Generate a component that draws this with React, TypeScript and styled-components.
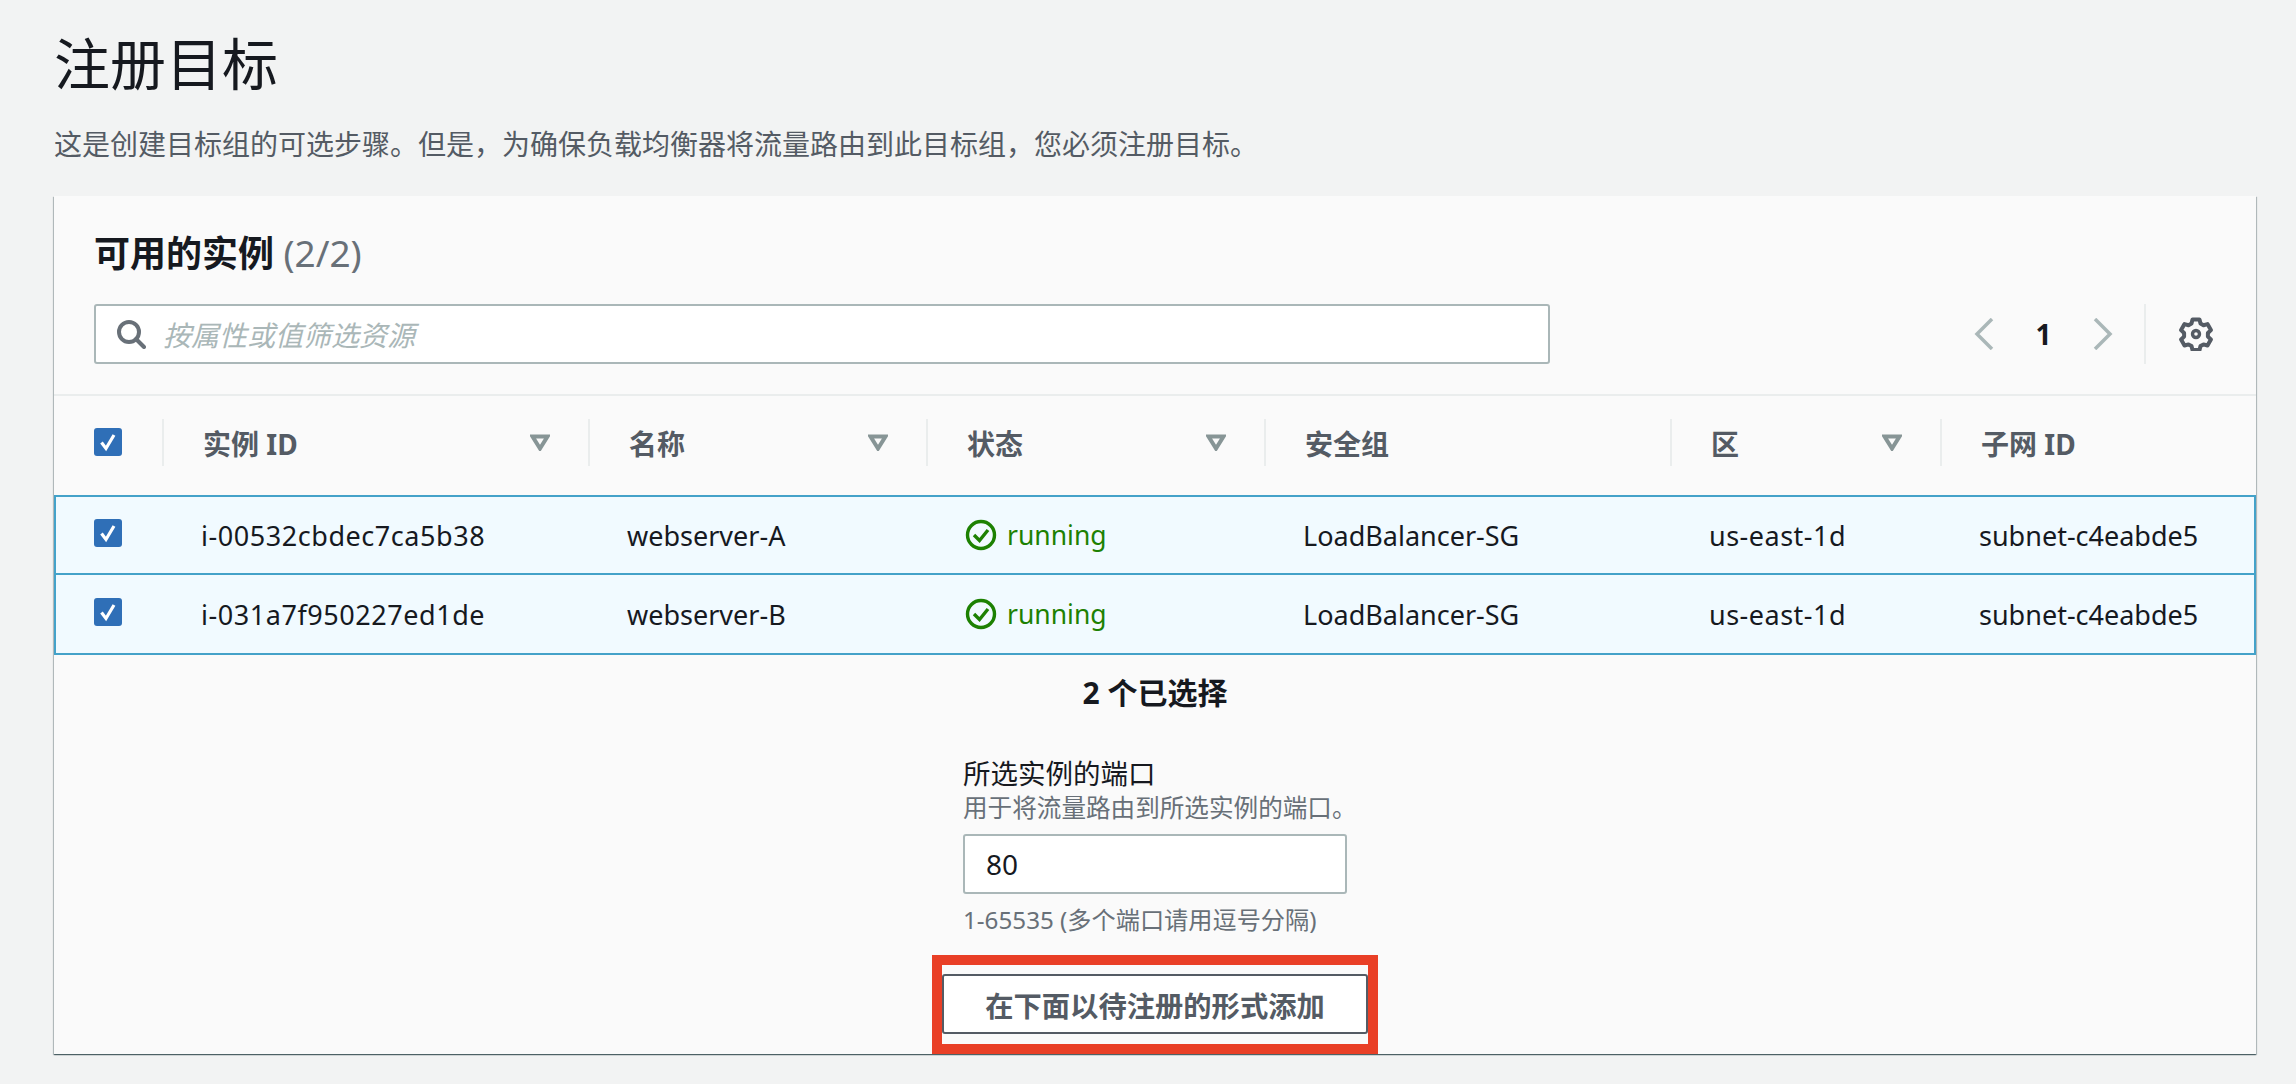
import React from "react";
import styled, { createGlobalStyle } from "styled-components";

const Global = createGlobalStyle`
  html, body { margin: 0; padding: 0; background: #f2f3f3; }
  body { font-family: "Noto Sans", "Noto Sans CJK SC", sans-serif; color: #16191f; }
  * { box-sizing: border-box; }
`;

const Page = styled.main`
  width: 2296px;
  height: 1084px;
  padding: 29px 40px 30px 54px;
  overflow: hidden;
`;

const Title = styled.h1`
  margin: 0 0 27px;
  font-size: 56px;
  line-height: 68px;
  font-weight: 400;
  color: #16191f;
`;

const Subtitle = styled.p`
  margin: 0 0 32px;
  font-size: 28px;
  line-height: 40px;
  color: #545b64;
`;

const Card = styled.section`
  height: 858px;
  background: #fafafa;
  display: flex;
  flex-direction: column;
  box-shadow: 0 1px 1px 0 rgba(0, 28, 36, 0.5), 1px 1px 1px 0 rgba(0, 28, 36, 0.2),
    -1px 1px 1px 0 rgba(0, 28, 36, 0.2);
`;

const CardHeader = styled.header`
  padding: 38px 0 30px 40px;
  border-bottom: 2px solid #eaeded;
`;

const CardTitle = styled.h2`
  margin: 0 0 30px;
  height: 40px;
  font-size: 36px;
  line-height: 40px;
  font-weight: 700;
  color: #16191f;
`;

const Count = styled.span`
  font-weight: 400;
  font-size: 37px;
  line-height: 1;
  color: #687078;
`;

const Toolbar = styled.div`
  display: flex;
  align-items: center;
`;

const SearchBox = styled.div`
  width: 1456px;
  height: 60px;
  display: flex;
  align-items: center;
  gap: 17px;
  padding-left: 20px;
  background: #fff;
  border: 2px solid #aab7b8;
  border-radius: 3px;
  color: #687078;
`;

const Placeholder = styled.span`
  font-size: 28px;
  font-style: italic;
  color: #aab7b8;
`;

const Pager = styled.div`
  display: flex;
  align-items: center;
  margin-left: 424px;
  height: 60px;
`;

const PageNumber = styled.span`
  width: 99px;
  text-align: center;
  font-size: 28px;
  font-weight: 700;
  color: #16191f;
`;

const Settings = styled.div`
  margin-left: 31px;
  height: 60px;
  padding-left: 33px;
  display: flex;
  align-items: center;
  border-left: 2px solid #eaeded;
  color: #545b64;
`;

const HeaderRow = styled.div`
  display: grid;
  grid-template-columns: 108px 426px 338px 338px 406px 270px 1fr;
  height: 99px;
  padding-bottom: 6px;
  align-items: center;
`;

const SelectHead = styled.div`
  padding: 0 0 2px 40px;
  display: flex;
`;

const HeadCell = styled.div`
  height: 47px;
  padding: 0 38px 0 39px;
  display: flex;
  align-items: center;
  justify-content: space-between;
  border-left: 2px solid #eaeded;
  font-size: 28px;
  font-weight: 700;
  color: #545b64;
`;

const Row = styled.div<{ $last?: boolean }>`
  display: grid;
  grid-template-columns: 107px 426px 338px 338px 406px 270px 1fr;
  align-items: center;
  height: ${(p) => (p.$last ? 82 : 80)}px;
  margin-top: ${(p) => (p.$last ? -2 : 0)}px;
  background: #f1faff;
  border: 2px solid #44a2c9;
  font-size: 27px;
  color: #16191f;
`;

const SelectCell = styled.div`
  padding: 0 0 4px 38px;
  display: flex;
`;

const Cell = styled.div<{ $track?: number }>`
  padding-left: 38px;
  white-space: nowrap;
  letter-spacing: ${(p) => p.$track ?? 0}px;
`;

const StatusCell = styled(Cell)`
  display: flex;
  align-items: center;
  gap: 10px;
  font-size: 26.5px;
  color: #1d8102;
`;

const Form = styled.div`
  flex: 1;
  display: flex;
  flex-direction: column;
  align-items: center;
`;

const Selected = styled.div`
  margin-top: 18px;
  font-size: 30px;
  line-height: 40px;
  font-weight: 700;
  color: #16191f;
`;

const Field = styled.div`
  margin-top: 44px;
  width: 384px;
`;

const FieldLabel = styled.div`
  font-size: 27.5px;
  line-height: 34px;
  color: #16191f;
  white-space: nowrap;
`;

const FieldDesc = styled.div`
  font-size: 24.6px;
  line-height: 34px;
  margin-bottom: 9px;
  color: #687078;
  white-space: nowrap;
`;

const PortInput = styled.div`
  height: 60px;
  display: flex;
  align-items: center;
  padding-left: 21px;
  background: #fff;
  border: 2px solid #aab7b8;
  border-radius: 3px;
  font-size: 28px;
  color: #16191f;
`;

const FieldHint = styled.div`
  margin-top: 10px;
  font-size: 24.2px;
  line-height: 32px;
  color: #687078;
  white-space: nowrap;
`;

const Highlight = styled.div`
  margin-top: 19px;
  border: 10px solid #e93f26;
  padding: 9px 0 10px;
  display: flex;
`;

const AddButton = styled.button`
  width: 426px;
  height: 60px;
  padding: 0;
  background: #fff;
  border: 2px solid #545b64;
  border-radius: 3px;
  font-family: inherit;
  font-size: 28.3px;
  font-weight: 700;
  color: #545b64;
`;

const Check = () => (
  <svg width="28" height="28" viewBox="0 0 28 28">
    <rect width="28" height="28" rx="3" fill="#2f6fb7" />
    <path d="M7.5 14.5l4.5 6 8-13.5" fill="none" stroke="#fff" strokeWidth="3.2" />
  </svg>
);

const Filter = () => (
  <svg width="20" height="17" viewBox="0 0 20 17">
    <path d="M2.5 2.5h15L10 14.5z" fill="none" stroke="#879596" strokeWidth="4" strokeLinejoin="miter" />
  </svg>
);

const SearchIcon = () => (
  <svg width="30" height="30" viewBox="0 0 30 30" fill="none" stroke="currentColor" strokeWidth="4">
    <circle cx="13" cy="13" r="10" />
    <path d="M20 20l8 8" strokeLinecap="round" />
  </svg>
);

const Chevron = ({ dir }: { dir: "left" | "right" }) => (
  <svg width="20" height="32" viewBox="0 0 20 32" fill="none" stroke="#aab7b8" strokeWidth="3.5">
    <path d={dir === "left" ? "M18 1L3 16l15 15" : "M2 1l15 15L2 31"} />
  </svg>
);

const Gear = () => (
  <svg width="34" height="34" viewBox="0 0 34 34" fill="none" stroke="currentColor" strokeWidth="4" strokeLinejoin="round">
    <path d="M13.5 2.5h7l1 4 3 1.7 4-1.1 3.4 6-3 2.9 0 3.6 3 2.9-3.4 6-4-1.1-3 1.7-1 4h-7l-1-4-3-1.7-4 1.1-3.4-6 3-2.9 0-3.6-3-2.9 3.4-6 4 1.1 3-1.7z" />
    <circle cx="17" cy="17" r="3.5" strokeWidth="3.4" />
  </svg>
);

const Running = () => (
  <svg width="32" height="32" viewBox="0 0 32 32" fill="none" stroke="#1d8102" strokeWidth="3.4">
    <circle cx="16" cy="16" r="13.5" />
    <path d="M9 16l5.5 5.5L23 11" />
  </svg>
);

const intro =
  "这是创建目标组的可选步骤。但是\uFF0C为确保负载均衡器将流量路由到此目标组\uFF0C您必须注册目标。";

const heads = [
  { label: "实例 ID", filter: true },
  { label: "名称", filter: true },
  { label: "状态", filter: true },
  { label: "安全组", filter: false },
  { label: "区", filter: true },
  { label: "子网 ID", filter: false },
];

const instances = [
  { id: "i-00532cbdec7ca5b38", name: "webserver-A" },
  { id: "i-031a7f950227ed1de", name: "webserver-B" },
];

export default function App() {
  return (
    <>
      <Global />
      <Page>
        <Title>注册目标</Title>
        <Subtitle>{intro}</Subtitle>
        <Card>
          <CardHeader>
            <CardTitle>
              可用的实例 <Count>(2/2)</Count>
            </CardTitle>
            <Toolbar>
              <SearchBox>
                <SearchIcon />
                <Placeholder>按属性或值筛选资源</Placeholder>
              </SearchBox>
              <Pager>
                <Chevron dir="left" />
                <PageNumber>1</PageNumber>
                <Chevron dir="right" />
                <Settings>
                  <Gear />
                </Settings>
              </Pager>
            </Toolbar>
          </CardHeader>
          <HeaderRow>
            <SelectHead>
              <Check />
            </SelectHead>
            {heads.map((h) => (
              <HeadCell key={h.label}>
                {h.label}
                {h.filter && <Filter />}
              </HeadCell>
            ))}
          </HeaderRow>
          {instances.map((item, i) => (
            <Row key={item.id} $last={i === 1}>
              <SelectCell>
                <Check />
              </SelectCell>
              <Cell $track={0.55}>{item.id}</Cell>
              <Cell>{item.name}</Cell>
              <StatusCell>
                <Running />
                running
              </StatusCell>
              <Cell>LoadBalancer-SG</Cell>
              <Cell $track={0.5}>us-east-1d</Cell>
              <Cell>subnet-c4eabde5</Cell>
            </Row>
          ))}
          <Form>
            <Selected>2 个已选择</Selected>
            <Field>
              <FieldLabel>所选实例的端口</FieldLabel>
              <FieldDesc>用于将流量路由到所选实例的端口。</FieldDesc>
              <PortInput>80</PortInput>
              <FieldHint>1-65535 (多个端口请用逗号分隔)</FieldHint>
            </Field>
            <Highlight>
              <AddButton>在下面以待注册的形式添加</AddButton>
            </Highlight>
          </Form>
        </Card>
      </Page>
    </>
  );
}
